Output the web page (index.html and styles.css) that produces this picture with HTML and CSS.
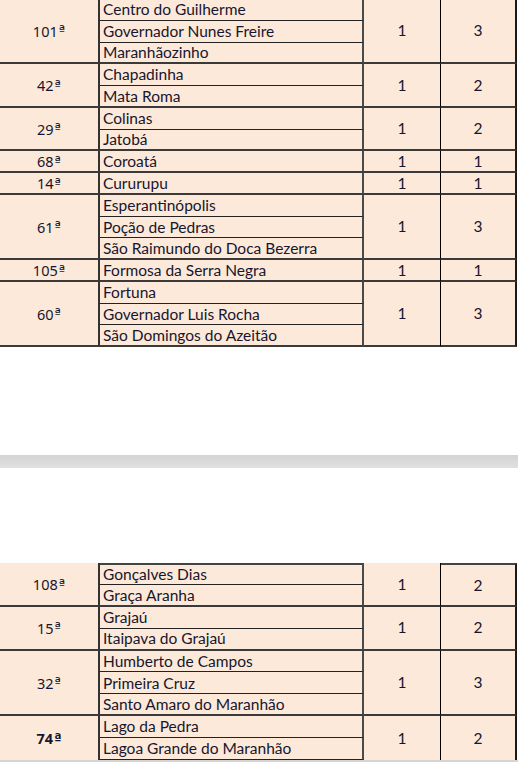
FILE: index.html
```html
<!DOCTYPE html>
<html lang="pt">
<head>
<meta charset="utf-8">
<title>Tabela</title>
<link rel="stylesheet" href="styles.css">
</head>
<body>
<div class="sheet first">
  <div class="c num end" style="grid-row: span 3">101<span class="ord">ª</span></div>
  <div class="c name">Centro do Guilherme</div>
  <div class="c val end" style="grid-row: span 3">1</div>
  <div class="c val2 end" style="grid-row: span 3">3</div>
  <div class="c name">Governador Nunes Freire</div>
  <div class="c name end">Maranhãozinho</div>

  <div class="c num end" style="grid-row: span 2">42<span class="ord">ª</span></div>
  <div class="c name">Chapadinha</div>
  <div class="c val end" style="grid-row: span 2">1</div>
  <div class="c val2 end" style="grid-row: span 2">2</div>
  <div class="c name end">Mata Roma</div>

  <div class="c num end" style="grid-row: span 2">29<span class="ord">ª</span></div>
  <div class="c name">Colinas</div>
  <div class="c val end" style="grid-row: span 2">1</div>
  <div class="c val2 end" style="grid-row: span 2">2</div>
  <div class="c name end">Jatobá</div>

  <div class="c num end">68<span class="ord">ª</span></div>
  <div class="c name end">Coroatá</div>
  <div class="c val end">1</div>
  <div class="c val2 end">1</div>

  <div class="c num end">14<span class="ord">ª</span></div>
  <div class="c name end">Cururupu</div>
  <div class="c val end">1</div>
  <div class="c val2 end">1</div>

  <div class="c num end" style="grid-row: span 3">61<span class="ord">ª</span></div>
  <div class="c name">Esperantinópolis</div>
  <div class="c val end" style="grid-row: span 3">1</div>
  <div class="c val2 end" style="grid-row: span 3">3</div>
  <div class="c name">Poção de Pedras</div>
  <div class="c name end">São Raimundo do Doca Bezerra</div>

  <div class="c num end">105<span class="ord">ª</span></div>
  <div class="c name end">Formosa da Serra Negra</div>
  <div class="c val end">1</div>
  <div class="c val2 end">1</div>

  <div class="c num end" style="grid-row: span 3">60<span class="ord">ª</span></div>
  <div class="c name">Fortuna</div>
  <div class="c val end" style="grid-row: span 3">1</div>
  <div class="c val2 end" style="grid-row: span 3">3</div>
  <div class="c name">Governador Luis Rocha</div>
  <div class="c name end">São Domingos do Azeitão</div>
</div>

<div class="gap-top"></div>
<div class="page-break"></div>
<div class="gap-bottom"></div>

<div class="sheet second">
  <div class="c num end" style="grid-row: span 2">108<span class="ord">ª</span></div>
  <div class="c name top">Gonçalves Dias</div>
  <div class="c val end" style="grid-row: span 2">1</div>
  <div class="c val2 end top" style="grid-row: span 2">2</div>
  <div class="c name end">Graça Aranha</div>

  <div class="c num end" style="grid-row: span 2">15<span class="ord">ª</span></div>
  <div class="c name">Grajaú</div>
  <div class="c val end" style="grid-row: span 2">1</div>
  <div class="c val2 end" style="grid-row: span 2">2</div>
  <div class="c name end">Itaipava do Grajaú</div>

  <div class="c num end" style="grid-row: span 3">32<span class="ord">ª</span></div>
  <div class="c name">Humberto de Campos</div>
  <div class="c val end" style="grid-row: span 3">1</div>
  <div class="c val2 end" style="grid-row: span 3">3</div>
  <div class="c name">Primeira Cruz</div>
  <div class="c name end">Santo Amaro do Maranhão</div>

  <div class="c num bold" style="grid-row: span 2">74<span class="ord">ª</span></div>
  <div class="c name">Lago da Pedra</div>
  <div class="c val" style="grid-row: span 2">1</div>
  <div class="c val2" style="grid-row: span 2">2</div>
  <div class="c name">Lagoa Grande do Maranhão</div>
</div>
<div class="page-break"></div>
</body>
</html>
```
FILE: styles.css
```css
html, body {
  margin: 0;
  padding: 0;
  background: #ffffff;
}

body {
  font-family: Lato, "Open Sans", "Noto Sans", sans-serif;
  font-size: 15.5px;
  color: #16162e;
  width: 518px;
  overflow: hidden;
}

.sheet {
  display: grid;
  grid-template-columns: 100px 264px 77px 76px;
  background: #fde9d9;
  width: 517px;
}

.first {
  grid-auto-rows: 21.75px;
  margin-top: -1px;
}

.second {
  grid-auto-rows: 21.9px;
}

.c {
  box-sizing: border-box;
  display: flex;
  align-items: center;
  white-space: nowrap;
  overflow: hidden;
  line-height: 1;
  padding-top: 1px;
}

.num {
  justify-content: center;
  font-family: "Noto Sans", "Open Sans", sans-serif;
  font-size: 14.5px;
  border-right: 2px solid #333333;
}

.ord {
  font-family: "DejaVu Sans", sans-serif;
  font-size: 13.5px;
  margin-left: 1px;
}

.name {
  padding-left: 3px;
  border-right: 2px solid #4a4a4a;
  border-bottom: 1px solid #222222;
}

.val {
  justify-content: center;
  border-right: 1px solid #000000;
}

.val2 {
  justify-content: center;
  border-right: 2px solid #1a1a1a;
}

.c.end {
  border-bottom: 2px solid #3a3a3a;
}

.top {
  border-top: 2px solid #444444;
}

.bold {
  font-weight: 700;
}

.gap-top {
  height: 108px;
}

.gap-bottom {
  height: 95px;
}

.page-break {
  height: 13px;
  background: linear-gradient(#d4d4d4, #e0e0e0);
}
```
